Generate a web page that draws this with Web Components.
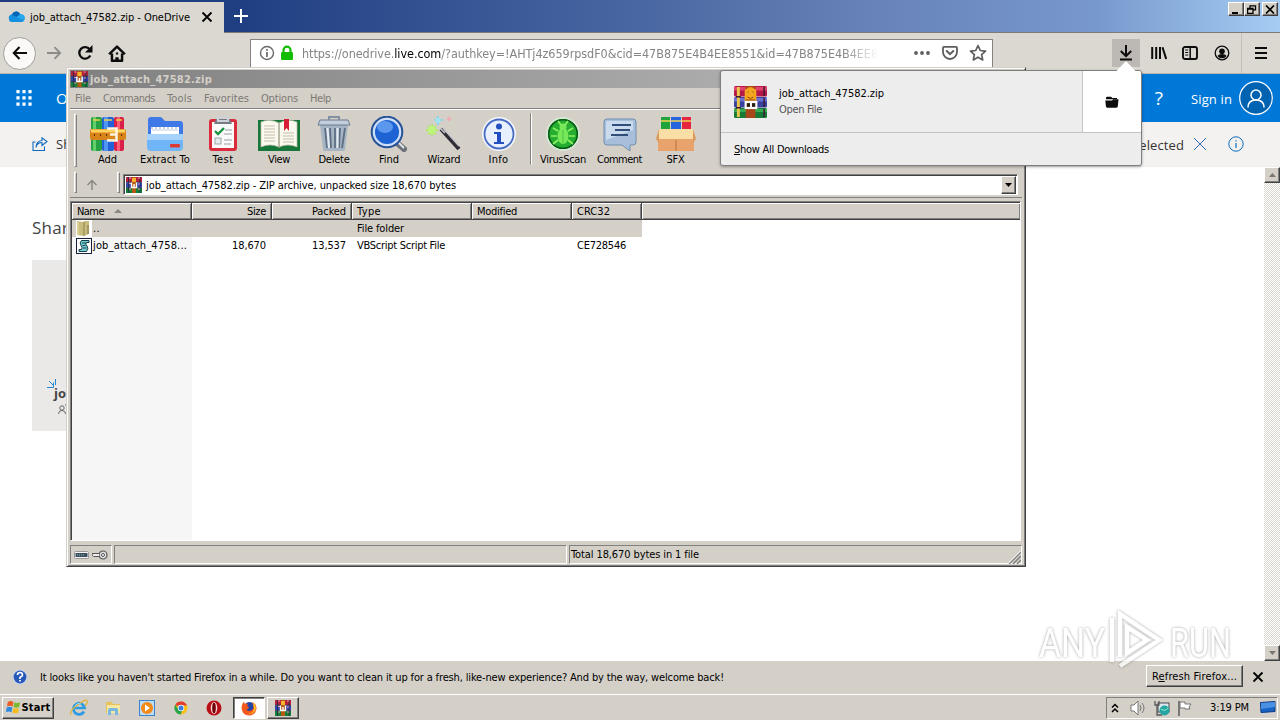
<!DOCTYPE html>
<html lang="en">
<head>
<meta charset="utf-8">
<title>job_attach_47582.zip - OneDrive</title>
<style>
html,body{margin:0;height:100%;overflow:hidden}
body{width:1280px;height:720px;background:#fff;font:11px/14px "DejaVu Sans Condensed","DejaVu Sans",sans-serif;font-stretch:condensed;color:#000}
</style>
</head>
<body>
<desktop-screen></desktop-screen>
<script>
const books = `
<rect x="0" y="0" width="34" height="10.5" rx="1.5" fill="#b5174a"/><rect x="0" y="1" width="34" height="3.5" fill="#e0446a"/>
<rect x="0" y="11" width="34" height="10.5" rx="1.5" fill="#39419d"/><rect x="0" y="12" width="34" height="3.5" fill="#6a70d0"/>
<rect x="0" y="22" width="34" height="10" rx="1.5" fill="#177a36"/><rect x="0" y="23" width="34" height="3" fill="#37aa52"/>
<rect x="3" y="1" width="3" height="30" fill="#e9c74b"/><path d="M2 10.700h5M2 21.700h5M31 1v9M31 12v9M31 23v8" stroke="#3b1730" stroke-width="1.500"/>
<rect x="12" y="0" width="10" height="32" fill="#a8481a"/><path d="M11 5q0-2 2-2 4-4 8 0 2 0 2 2v10H11z" fill="#f4a51f"/><path d="M14 6h1M19 6h1M14 11q3 3 6 0M12 14h10" stroke="#8c4410" fill="none"/>
<rect x="12" y="16" width="11" height="6" fill="#2d2010" stroke="#fff" stroke-width="2.200"/><rect x="16.500" y="15" width="2" height="6" fill="#fff"/>`;
const rar16 = `<rect width="16" height="5" fill="#b8203c"/><rect y="5.5" width="16" height="5" fill="#3343b0"/><rect y="11" width="16" height="5" fill="#15803a"/><path d="M0 5.2h16M0 10.7h16M2.5 0v16M14 0v16" stroke="#222a44" stroke-width=".8"/><path d="M3 1h2M3 6.500h2M3 12h2M12 1h2M12 7h2M12 12h2" stroke="#f0a0a8"/><rect x="6" width="4" height="16" fill="#b35a12"/><rect x="6" y="1" width="4" height="4" fill="#f6b52c"/><path d="M5.500 5.500v5h5v-5M8 7v3" fill="none" stroke="#fff" stroke-width="1.400"/>`;
const ICONS = {
rar:[16,16,rar16], books:[34,32,books],
cloud:[18,12,`<path d="M3 9Q0 8 1 5.500q1-2 3-2Q6 0 9.500.6 12 1 13 3.300q4 0 4.600 3Q18 11 14 11H4Q1 11 1 8z" fill="#1490df"/><path d="M4 3.500Q6 0 9.500.6 12 1 13 3.300L9 6z" fill="#0364b8"/><path d="M9 6l4-2.700q4 0 4.600 3Q18 8 17 9.500z" fill="#28a8ea"/>`],
x:[12,12,`<path d="M1.500 1.500l9 9M10.500 1.500l-9 9" stroke="currentColor" stroke-width="1.800"/>`],
thinx:[14,14,`<path d="M1 1l12 12M13 1L1 13" stroke="#2b6cb0"/>`],
plus:[14,14,`<path d="M7 0v14M0 7h14" stroke="#fff" stroke-width="2"/>`],
back:[16,14,`<path d="M15 7H2M7.500 1L1.800 7l5.700 6" fill="none" stroke="#0c0c0d" stroke-width="2.100"/>`],
fwd:[16,14,`<path d="M1 7h13M8.500 1.200L14.200 7l-5.700 5.800" fill="none" stroke="#8d8b87" stroke-width="1.800"/>`],
reload:[16,16,`<path d="M13.300 10.500A5.800 5.800 0 1 1 12.700 4.300" fill="none" stroke="#0c0c0d" stroke-width="2.300"/><path d="M15.500 0v7.500H8z" fill="#0c0c0d"/>`],
home:[16,16,`<path d="M1 8.700L8 1.500l7 7.200M3.500 8v6.800h9V8" fill="none" stroke="#0c0c0d" stroke-width="2.200" stroke-linejoin="round"/><path d="M6.500 15v-3.500h3V15zM7 7h2v2H7z" fill="#0c0c0d"/>`],
info:[16,16,`<circle cx="8" cy="8" r="6.500" fill="none" stroke="#6a6a6c" stroke-width="1.400"/><path d="M8 4v1.700M8 7v5" stroke="#6a6a6c" stroke-width="1.700"/>`],
lock:[14,16,`<path d="M3.500 8V5.200a3.500 3.500 0 0 1 7 0V8" fill="none" stroke="#12bc00" stroke-width="2.200"/><rect x="1" y="7" width="12" height="8" rx="1.300" fill="#12bc00"/>`],
dots:[16,4,`<circle cx="2" cy="2" r="1.900" fill="#5e5e60"/><circle cx="8" cy="2" r="1.900" fill="#5e5e60"/><circle cx="14" cy="2" r="1.900" fill="#5e5e60"/>`],
pocket:[16,16,`<path d="M2 1.800h12q1 0 1 1V7a7 7 0 0 1-14 0V2.800q0-1 1-1z" fill="none" stroke="#5e5e60" stroke-width="1.800"/><path d="M4.700 6L8 9.200 11.300 6" fill="none" stroke="#5e5e60" stroke-width="2" stroke-linecap="round"/>`],
star:[18,18,`<path d="M9 1.600l2.300 4.900 5.200.6-3.900 3.500 1.100 5.300L9 13.200l-4.700 2.700 1.100-5.300L1.500 7.100l5.200-.6z" fill="none" stroke="#5e5e60" stroke-width="1.700" stroke-linejoin="round"/>`],
down:[14,16,`<path d="M7 0v11M1.800 6L7 11.200 12.200 6" fill="none" stroke="#0c0c0d" stroke-width="2"/><path d="M1 14.500h12" stroke="#0c0c0d" stroke-width="2"/>`],
lib:[16,14,`<path d="M1.200 1v12M5.200 1v12M9 1v12" stroke="#0c0c0d" stroke-width="2"/><path d="M11.500 1.200L15.200 13" stroke="#0c0c0d" stroke-width="2"/>`],
side:[16,14,`<rect x="1" y="1" width="14" height="12" rx="2" fill="none" stroke="#0c0c0d" stroke-width="1.900"/><path d="M8.200 1v12" stroke="#0c0c0d" stroke-width="1.500"/><path d="M3.200 4h3M3.200 6.500h3M3.200 9h3" stroke="#0c0c0d"/>`],
acct:[16,16,`<circle cx="8" cy="8" r="6.800" fill="none" stroke="#0c0c0d" stroke-width="1.300"/><circle cx="8" cy="6.200" r="2.800" fill="#0c0c0d"/><path d="M3.500 11q1-2 4.500-2t4.500 2Q11 13.200 8 13.200T3.500 11z" fill="#0c0c0d"/>`],
menu:[12,14,`<path d="M0 2h12M0 7h12M0 12h12" stroke="#0c0c0d" stroke-width="2"/>`],
waffle:[16,16,`<path d="M2 0v16M8 0v16M14 0v16" stroke="#fff" stroke-width="3.200" stroke-dasharray="3.200 3.100"/>`],
person:[34,34,`<circle cx="17" cy="17" r="16.300" fill="#0063b1" stroke="#fff" stroke-width="1.200"/><circle cx="17" cy="14" r="5" fill="none" stroke="#fff" stroke-width="1.500"/><path d="M9 26.500q0-7.500 8-7.500t8 7.500" fill="none" stroke="#fff" stroke-width="1.500"/>`],
share:[16,14,`<path d="M3.500 5H1v8.500h11.500V9.500M4 10.500Q5 5.500 10 5.500V8.500L15 4.500 10 .8v2.700Q4 4 4 10.500z" fill="none" stroke="#0f6cbd" stroke-width="1.100"/>`],
infob:[16,16,`<circle cx="8" cy="8" r="7.200" fill="none" stroke="#0f6cbd"/><path d="M8 4.300v1.200M8 7v5" stroke="#0f6cbd" stroke-width="1.200"/>`],
spark:[10,10,`<path d="M2 2l4.500 4.500M0 8.500h6.500v-5M8.500 0v6" stroke="#2188d8" fill="none"/>`],
people:[10,10,`<circle cx="4" cy="4" r="2.200" fill="none" stroke="#666"/><path d="M.5 10q0-3.500 3.500-3.500T7.500 10M7 1q2-1 3 1M8 5l2 1" fill="none" stroke="#666"/>`],
folder:[14,12,`<path d="M1 2q0-1.300 1.300-1.300H6L7.300 2H12v1.300H1z" fill="#0c0c0d"/><path d="M.3 4.500H7L8.300 3.300h5.200l-.7 7q-.1 1.400-1.500 1.400H2.400Q1 11.700.9 10.300z" fill="#0c0c0d"/>`],
up:[12,12,`<path d="M6 11V2M1.500 6L6 1.500 10.500 6" fill="none" stroke="#8b8883" stroke-width="1.500"/>`],
add:[36,36,`<rect x="1" y="1" width="11" height="34" rx="2" fill="#26a243"/><rect x="3" y="1" width="3" height="34" fill="#63cf6c"/><rect x="12" y="1" width="12" height="34" rx="2" fill="#2461d8"/><rect x="14" y="1" width="4" height="34" fill="#4f97f3"/><rect x="24" y="1" width="10" height="34" rx="2" fill="#d92048"/><rect x="27" y="1" width="3" height="34" fill="#ff6077"/><path d="M3 4h7M14 4h8M26 4h6" stroke="#f0ce45" stroke-width="1.500"/><rect x="0" y="13" width="36" height="11" rx="2" fill="#d98418"/><path d="M1 15h34" stroke="#ffd45e" stroke-width="3"/><path d="M4 19h1M10 19h1M16 19h1M31 19h1" stroke="#5c2c08" stroke-width="2"/><path d="M18.500 14v-1.500h8v12h-8V23M20 18.500h6" fill="none" stroke="#fff4e0" stroke-width="2.600"/>`],
extract:[38,36,`<path d="M2 4q0-3 3-3h9q2 0 3 2l2 2h15q3 0 3 3v22H2z" fill="#3f79e8"/><path d="M5 11h28v12H5z" fill="#fff"/><path d="M6 14h26" stroke="#bed1ea"/><path d="M5 12h28" stroke="#94a8c0" stroke-dasharray="2 2"/><path d="M1 18h36v13q0 4-4 4H5q-4 0-4-4z" fill="#6fb5f7"/><path d="M1 18h36v6H1z" fill="#a5d3fb"/><rect x="24" y="28" width="10" height="3.500" rx="1" fill="#dc3b34"/>`],
test:[30,36,`<rect x="1" y="3" width="28" height="32" rx="3" fill="#d92b3c"/><rect x="4" y="6" width="22" height="26" fill="#fafafa"/><path d="M8 3h14l2 5H6z" fill="#777b84"/><path d="M10 1h10v4H10z" fill="none" stroke="#ced1d7" stroke-width="2"/><path d="M7 15l3 3 6-6" fill="none" stroke="#17933e" stroke-width="2.300"/><path d="M17 14h7M16 18h8M16 24h8M16 28h7" stroke="#98a0a8"/><rect x="7" y="22" width="6" height="6" fill="#e9ecef" stroke="#9aa"/>`],
view:[44,36,`<path d="M1 4h42v31H1z" fill="#17773b"/><path d="M4 6q9-4 18 1v24q-9-4-18 0zM40 6q-9-4-18 1v24q9-4 18 0z" fill="#fbf9ee" stroke="#b9b8a4" stroke-width=".7"/><path d="M7 10h11M7 13h11M7 16h11M7 19h11M7 22h11M7 25h11M26 17h11M26 20h11M26 23h11M26 26h11" stroke="#c3bcab"/><path d="M27 3h5v12l-2.500-3-2.500 3z" fill="#d71d35"/><path d="M22 7v25" stroke="#a2a28f"/>`],
delete:[34,36,`<path d="M3 9h28l-3 24q0 2-3 2H9q-3 0-3-2z" fill="#a6b4c4"/><path d="M8 12l2 20M13 12l1 20M18 12v20M23 12l-1 20M28 12l-3 20" stroke="#5d6e83" stroke-width="1.800"/><path d="M10.500 12l1.500 20M20.500 12v20" stroke="#e5edf4" stroke-width="2"/><path d="M1 9l2-5h28l2 5z" fill="#c4cedb" stroke="#697b91"/><path d="M12 4V1h10v3" fill="none" stroke="#8290a3" stroke-width="2"/>`],
find:[38,36,`<path d="M26 26l8 7" stroke="#6b727b" stroke-width="6" stroke-linecap="round"/><path d="M26 24l8 8" stroke="#e3e6e9" stroke-width="2"/><circle cx="17" cy="16" r="13.300" fill="#1d63d3" stroke="#cfe0f6" stroke-width="2.500"/><circle cx="17" cy="16" r="15.300" fill="none" stroke="#27539a" stroke-width="2"/><ellipse cx="15" cy="11" rx="8" ry="6" fill="#5c97ee"/>`],
wizard:[36,36,`<path d="M15 13l18 20" stroke="#302d36" stroke-width="4"/><path d="M14 12l5 5M17 12l16 18" stroke="#c4c6cb" stroke-width="1.600"/><g stroke-width="1.600"><path d="M6 8v12M0 14h12M2 10l8 8M10 10l-8 8" stroke="#a3ed59"/><path d="M12 0v9M8 4h9" stroke="#78d5ee"/><path d="M23 1v4M21 3h4" stroke="#f4a8b3"/></g><circle cx="6" cy="14" r="4" fill="#bdf57a"/><circle cx="12" cy="4.500" r="2.500" fill="#9fe4f5"/>`],
infobig:[36,36,`<circle cx="18" cy="18" r="17" fill="#f5f7ff"/><circle cx="18" cy="18" r="14.500" fill="#e8efff" stroke="#456bc0" stroke-width="1.800"/><circle cx="18" cy="10.500" r="3" fill="#244fc0"/><path d="M13 16h7v10h3v2H13v-2h3v-8h-3z" fill="#244fc0"/>`],
virus:[36,36,`<circle cx="18" cy="18" r="16" fill="#138b22" stroke="#d6e8d3" stroke-width="2"/><circle cx="18" cy="18" r="14.300" fill="#27ae31" stroke="#065c15" stroke-width="1.500"/><ellipse cx="18" cy="20" rx="5.500" ry="8" fill="#77e859"/><circle cx="18" cy="11" r="3.500" fill="#77e859"/><path d="M13 15l-5-3M12 20H6M13 24l-5 4M23 15l5-3M24 20h6M23 24l5 4M16 9l-3-4M20 9l3-4" stroke="#8af267" stroke-width="1.700"/><path d="M18 14v13" stroke="#4cc447"/>`],
comment:[36,36,`<path d="M5 3h26q3 0 3 3v20q0 3-3 3h-3v6l-8-6H5q-3 0-3-3V6q0-3 3-3z" fill="#a8bfdc" stroke="#718dae"/><path d="M5 5h26v9L4 24V6z" fill="#cadbed"/><path d="M10 9h19M13 14h15M9 19h17" stroke="#304e79" stroke-width="1.800"/>`],
sfx:[40,36,`<rect x="5" y="1" width="9" height="19" fill="#20a33b"/><rect x="15" y="1" width="10" height="19" fill="#2864dc"/><rect x="26" y="1" width="9" height="19" fill="#e52540"/><path d="M5 5h9M15 5h10M26 5h9" stroke="#efd452" stroke-width="1.500"/><path d="M2 15h36v20H2z" fill="#e8a36c"/><path d="M3 13h34l2 10H1z" fill="#f9dfa6"/><path d="M0 23l3-10v14zM40 23l-3-10v14z" fill="#dc985a"/><path d="M20 24v11" stroke="#bd703c"/>`],
fold:[16,17,`<rect width="16" height="17" fill="#fff"/><path d="M1 1l7 1v14l-7-1zM8 1h5v13l-5 2z" fill="#c9bd7d"/><path d="M8 2v14" stroke="#8e834d"/><path d="M2 2v13" stroke="#eee5ae"/><path d="M12 5v9" stroke="#a29860" stroke-width="2"/>`],
vbs:[16,16,`<rect x=".5" y=".5" width="15" height="15" fill="#fff" stroke="#16203c"/><path d="M5.500 2.500h7.500v2h-2.500q-1.500 1.500.5 3.500t-.5 5.500H3v-2h2.500q1.500-1.500-.5-4t.5-5z" fill="#75cfd3" stroke="#123d48"/><path d="M6 5h4M6.500 7.500h3M7 10h3.500" stroke="#123d48"/>`],
drive:[15,8,`<rect x=".5" y=".5" width="14" height="7" rx="1" fill="#f4f4f4" stroke="#999"/><path d="M1.500 2h12v4h-12z" fill="#3c4e5c"/><path d="M3 4h8" stroke="#8cc" stroke-dasharray="1 1"/>`],
key:[16,10,`<circle cx="11" cy="5" r="4" fill="#dedede" stroke="#555" stroke-width="1.200"/><circle cx="11" cy="5" r="1.500" fill="#fff" stroke="#555"/><path d="M0 3.500h7.500M2 6.500h5.500M0 3v2l2 1.500" stroke="#555" fill="none"/><path d="M1 5h6" stroke="#eee" stroke-width="2"/>`],
help:[16,16,`<circle cx="8" cy="8" r="7.500" fill="#c9d6ef"/><circle cx="8" cy="8" r="6.400" fill="#2858b8"/><path d="M5.500 6q0-2.500 2.500-2.500T10.500 6q0 1.300-2.500 2.300V10M8 11v1.500" fill="none" stroke="#fff" stroke-width="1.700"/>`],
win:[16,16,`<path d="M2 2q3-2 6 0L7 7Q4 5.500 1 7z" fill="#ee5a24"/><path d="M9 2.500q3 1.500 6 0L14 7.500q-3 1.500-6 0z" fill="#7cb82f"/><path d="M.8 8q3-1.500 6 0l-1 5q-3-1.500-6 0z" fill="#2d8be0"/><path d="M7.800 8.500q3 1.500 6 0l-1 5q-3 1.500-6 0z" fill="#f9bc1e"/>`],
ie:[18,18,`<path d="M14 12.500A5.600 5.600 0 1 1 14.600 9H5" fill="none" stroke="#2d9be2" stroke-width="2.700"/><path d="M1 16Q-1 12 8 5.500T17 2q1 2-2 5" fill="none" stroke="#dcb63a" stroke-width="1.300"/><path d="M5 7q2-4 6-2" stroke="#a2def9" fill="none"/>`],
explorer:[16,16,`<path d="M1 2h6l1 2h7v9H1z" fill="#e6c35a"/><path d="M2 5h13v8H2z" fill="#f8e7a0"/><path d="M3 15v-5q0-2 2-2h6q2 0 2 2v5h-3v-4H6v4z" fill="#77b8e2"/>`],
wmp:[16,16,`<rect x=".5" y=".5" width="15" height="15" fill="#bfdcf7" stroke="#3c82ce"/><circle cx="8" cy="8" r="6" fill="#f18a16"/><path d="M6 4.500l5 3.500-5 3.500z" fill="#fff"/>`],
chrome:[16,16,`<circle cx="8" cy="8" r="6.500" fill="#fbc116"/><path d="M8 8L2.300 4.700A6.500 6.500 0 0 1 14 5.500H8z" fill="#e33b2e"/><path d="M2.300 4.700A6.500 6.500 0 0 0 7.500 14.500L10 9.500 5 9z" fill="#27a34a"/><circle cx="8" cy="8" r="3.200" fill="#fff"/><circle cx="8" cy="8" r="2.500" fill="#3a7de0"/>`],
opera:[16,16,`<circle cx="8" cy="8" r="7.500" fill="#b80f16"/><ellipse cx="8" cy="8" rx="3.300" ry="6" fill="#f7d7d7"/><ellipse cx="8" cy="8" rx="1.800" ry="5.300" fill="#700008"/>`],
firefox:[16,16,`<circle cx="8.500" cy="8" r="6" fill="#2444a8"/><path d="M1 5Q2 2 3 2L4 4Q6 3 7 4 5 6 8 7 7 10 5 9q3 4 7 0 1-4-1-7 5 2 4.500 7Q14 15.500 8 15.500T.7 9Q.5 7 1 5z" fill="#f4581b"/><path d="M12 2q4 4 2.500 8-3 5-8 3.500 6 0 6.500-5z" fill="#ffc426"/>`],
chev:[8,10,`<path d="M1 4.500L4 1.500l3 3M1 9L4 6l3 3" fill="none" stroke="#000" stroke-width="1.500"/>`],
sound:[16,16,`<path d="M1 5h3l4-4v14L4 11H1z" fill="#fff" stroke="#777"/><path d="M10 5q2 3 0 6M12 3q4 5 0 10" stroke="#777" fill="none"/>`],
net:[16,16,`<rect x="4" y="3" width="11" height="9" fill="#dce7ee" stroke="#404850"/><path d="M1 1v4h4V1M3 5v10h5" fill="none" stroke="#555" stroke-width="1.300"/><circle cx="10.500" cy="10.500" r="5" fill="#26a6a0"/><path d="M7 9q4 3 7-1" stroke="#9be8df" fill="none"/>`],
flag:[16,16,`<path d="M2 1v15" stroke="#777" stroke-width="2"/><path d="M3 2h5v2h6l-2 3 1 2H8V8H3z" fill="#fff" stroke="#777"/>`],
desk:[16,14,`<path d="M.5 1.500L15 .5v10l-14 1z" fill="#1762c5" stroke="#0e387b"/><path d="M1 2l14-1v5L1 8z" fill="#4a91e4"/><path d="M1 12.500h14" stroke="#ccd5df"/>`],
grip:[13,13,`<path d="M1 13L13 1M5 13l8-8M9 13l4-4" stroke="#808080" stroke-width="1.500"/><path d="M0 12.500L12.500 0" stroke="#fff"/>`],
sort:[8,4,`<path d="M0 4l4-4 4 4z" fill="#8a8780"/>`],
triD:[7,4,`<path d="M0 0h7L3.500 4z" fill="currentColor"/>`],
triU:[7,4,`<path d="M0 4h7L3.500 0z" fill="currentColor"/>`],
wmin:[10,9,`<path d="M1 8h6" stroke="#000" stroke-width="2"/>`],
wres:[10,9,`<path d="M3 3V.9h5.500v4H6.500M.6 3.500h5.400v4.800H.6zM.6 4h5.400" fill="none" stroke="#000" stroke-width="1.300"/>`],
wx:[10,9,`<path d="M1 .5l8 8M9 .5l-8 8" stroke="#000" stroke-width="1.700"/>`]
};
const define = (name, css, html) => customElements.define(name, class extends HTMLElement {
  connectedCallback(){
    if (this.shadowRoot) return;
    this.attachShadow({mode:'open'}).innerHTML = `<style>*{box-sizing:border-box}${css}</style>${typeof html==='function'?html(this):html}`;
  }
});
define('ui-icon', ':host{display:block;flex:none;line-height:0}svg{display:block}', e=>{
  const [w,h,s]=ICONS[e.getAttribute('name')], W=e.getAttribute('w')||w, H=e.getAttribute('h')||h;
  return `<svg width="${W}" height="${H}" viewBox="0 0 ${w} ${h}" preserveAspectRatio="none">${s}</svg>`;});

define('bevel-button', `:host{display:flex;align-items:center;justify-content:center;box-sizing:border-box;flex:none;background:#d4d0c8;border:1px solid;border-color:#fff #404040 #404040 #fff;box-shadow:inset -1px -1px #808080}
:host([pressed]){background:#fff;border-color:#404040 #fff #fff #404040;box-shadow:inset 1px 1px #808080}`, '<slot></slot>');

define('fx-tabs', `:host{--dy:1px;display:flex;height:33px;flex:none;border-bottom:1px solid #7d7b78;background:linear-gradient(90deg,#1f3b7f 0,#203f83 240px,#4967a2 640px,#6681b5 860px,#7899cd 1100px,#a5cdf3 1280px)}
.tab{width:224px;margin-top:2px;height:32px;background:#dbd8d1;display:flex;align-items:center;padding:0 11px 2px 8px}
.tab fit-text{margin-left:5px;flex:1}.plus{margin:9px 0 0 10px}.ctl{margin:2px 2px 0 auto;display:flex;height:14px}`,
`<div class="tab"><ui-icon name="cloud" w="17"></ui-icon><fit-text w="160">job_attach_47582.zip - OneDrive</fit-text><ui-icon name="x"></ui-icon></div>
<ui-icon class="plus" name="plus"></ui-icon>
<div class="ctl"><bevel-button style="width:16px"><ui-icon name="wmin"></ui-icon></bevel-button><bevel-button style="width:16px"><ui-icon name="wres"></ui-icon></bevel-button><bevel-button style="width:16px;margin-left:2px"><ui-icon name="wx"></ui-icon></bevel-button></div>`);

define('fx-nav', `:host{--dy:1px;display:flex;height:41px;flex:none;background:#dbd8d1;align-items:center;border-bottom:1px solid #b7b4ae}
.back{width:33px;height:33px;border-radius:50%;border:1px solid #a19f9b;background:#faf9f7;display:flex;align-items:center;justify-content:center;margin-left:3px}
.url{width:743px;height:29px;margin-left:124px;border:1px solid #858381;background:#fff;display:flex;align-items:center;padding:0 6px 0 8px}
.u{width:576px;margin:0 36px 0 8px;font-size:12.500px;line-height:16px;color:#858585;-webkit-mask:linear-gradient(90deg,#000 94%,transparent)}b{font-weight:400;color:#000}
.dl{width:28px;height:28px;background:#bcb9b4;display:flex;align-items:center;justify-content:center;margin-left:119px}
i{height:40px;border-left:1px solid #c4c1bb;margin:0 13px 0 11px}`,
`<div class="back"><ui-icon name="back"></ui-icon></div><ui-icon name="fwd" style="margin-left:10px"></ui-icon><ui-icon name="reload" style="margin-left:15px"></ui-icon><ui-icon name="home" w="18" h="17" style="margin-left:15px"></ui-icon>
<div class="url"><ui-icon name="info"></ui-icon><ui-icon name="lock" style="margin-left:5px"></ui-icon><div class="u"><fit-text w="576">https://onedrive.<b>live.com</b>/?authkey=!AHTj4z659rpsdF0&amp;cid=47B875E4B4EE8551&amp;id=47B875E4B4EE8</fit-text></div>
<ui-icon name="dots"></ui-icon><ui-icon name="pocket" style="margin-left:12px"></ui-icon><ui-icon name="star" style="margin-left:11px"></ui-icon></div>
<div class="dl"><ui-icon name="down"></ui-icon></div><ui-icon name="lib" style="margin-left:11px"></ui-icon><ui-icon name="side" style="margin-left:15px"></ui-icon><ui-icon name="acct" style="margin-left:16px"></ui-icon><i></i><ui-icon name="menu"></ui-icon>`);

define('od-page', `:host{display:flex;flex-direction:column;flex:1;min-height:0;background:#fff;font-family:"Open Sans","Noto Sans",sans-serif;font-stretch:normal}
.head{height:48px;background:#0078d7;color:#fff;display:flex;align-items:center;padding:0 7px 0 16px;flex:none;font-size:14px}
.cmd{height:45px;background:#f3f2f0;display:flex;align-items:center;padding:0 36px 0 32px;flex:none;color:#333;font-size:13px;border-bottom:1px solid #eee;--dy:1px}
.main{flex:1;display:flex;min-height:0}.body{flex:1;padding:49px 32px 0}
h1{font:400 17px/24px "Open Sans";letter-spacing:.2px;margin:0 0 20px;color:#444}
.tile{width:180px;height:171px;background:#ebe9e8;display:flex;flex-direction:column;padding:119px 0 0 15px;font-size:13px;color:#444;line-height:16px}
.tile b{margin:-4px 0 0 7px}.tile ui-icon+b+ui-icon{margin:3px 0 0 11px}
.sb{width:16px;display:flex;flex-direction:column;justify-content:space-between;background:repeating-conic-gradient(#fff 0 25%,#dcd9d3 0 50%) 0 0/2px 2px;color:#7b7873}
.sb bevel-button{height:16px}.r{margin-left:auto}`,
`<div class="head"><ui-icon name="waffle"></ui-icon><span style="margin-left:24px;font-size:15px">O</span><span class="r" style="font-size:19px;margin-right:1px">?</span><fit-text w="41" style="margin:1px 7px 0 27px;font-size:13px">Sign in</fit-text><ui-icon name="person"></ui-icon></div>
<div class="cmd"><ui-icon name="share"></ui-icon><span style="margin-left:8px">Sh</span><fit-text class="r" w="62">1 selected</fit-text><ui-icon name="thinx" style="margin-left:9px"></ui-icon><ui-icon name="infob" style="margin-left:21px"></ui-icon></div>
<div class="main"><div class="body"><h1>Shared</h1><div class="tile"><ui-icon name="spark"></ui-icon><b>job_attach</b><ui-icon name="people"></ui-icon></div></div>
<div class="sb"><bevel-button><ui-icon name="triU"></ui-icon></bevel-button><bevel-button><ui-icon name="triD"></ui-icon></bevel-button></div></div>`);

define('fx-notice', `:host{--dy:1px;display:flex;height:33px;flex:none;background:#d4d0c8;align-items:center;padding:0 16px 1px 12px;box-sizing:border-box}`,
`<ui-icon name="help"></ui-icon><fit-text w="684" style="margin-left:12px">It looks like you haven't started Firefox in a while. Do you want to clean it up for a fresh, like-new experience? And by the way, welcome back!</fit-text>
<bevel-button style="width:97px;height:22px;margin:-2px 9px 0 auto"><fit-text w="85">R<u>e</u>fresh Firefox...</fit-text></bevel-button><ui-icon name="x"></ui-icon>`);

define('win-taskbar', `:host{display:flex;height:26px;flex:none;background:#d4d0c8;border-top:1px solid #fff;box-sizing:border-box;align-items:center;padding:0 2px}
.start{width:52px;height:22px;font-weight:700}.q{display:flex;margin-left:16px;gap:18px;align-items:center;width:163px;flex:none}
.tray{margin-left:auto;width:172px;height:22px;border:1px solid;border-color:#808080 #fff #fff #808080;display:flex;align-items:center;padding:0 1px 0 5px}`,
`<bevel-button class="start"><ui-icon name="win" w="15" h="15"></ui-icon><fit-text w="29" style="margin-left:1px">Start</fit-text></bevel-button>
<div class="q"><ui-icon name="ie"></ui-icon><ui-icon name="explorer" style="margin-left:-1px"></ui-icon><ui-icon name="wmp"></ui-icon><ui-icon name="chrome"></ui-icon><ui-icon name="opera" style="margin-left:-1px"></ui-icon></div>
<bevel-button pressed style="width:32px;height:22px"><ui-icon name="firefox"></ui-icon></bevel-button><bevel-button style="width:32px;height:22px;margin-left:2px"><ui-icon name="rar"></ui-icon></bevel-button>
<div class="tray"><ui-icon name="chev" style="margin-left:-1px"></ui-icon><ui-icon name="sound" style="margin-left:11px"></ui-icon><ui-icon name="net" style="margin-left:8px"></ui-icon><ui-icon name="flag" style="margin-left:7px"></ui-icon><fit-text w="39" style="margin-left:17px">3:19 PM</fit-text><ui-icon name="desk" style="margin-left:auto"></ui-icon></div>`);

define('rar-tool', `:host{display:flex;flex-direction:column;align-items:center;flex:none;height:51px;justify-content:space-between}`,
 e=>`<ui-icon name="${e.getAttribute('icon')}"></ui-icon><fit-text w="${e.getAttribute('tw')}"><slot></slot></fit-text>`);

const T=(icon,label,w,tw)=>`<rar-tool icon="${icon}" tw="${tw}" style="width:${w}px">${label}</rar-tool>`;
const F=(w,t,s='')=>`<fit-text w="${w}" style="${s}">${t}</fit-text>`;
define('rar-window', `:host{display:flex;flex-direction:column;box-sizing:border-box;background:#d4d0c8;border:1px solid;border-color:#d4d0c8 #404040 #404040 #d4d0c8;box-shadow:inset 1px 1px #fff,inset -1px -1px #808080;padding:2px 3px 2px 3px}
.title,.menu,.addr,.hd{--dy:1px}
.title{height:18px;background:linear-gradient(90deg,#808080,#a6a6a6 60%,#c0c0c0);color:#d4d0c8;font-weight:700;display:flex;align-items:center;padding-left:1px;gap:2px;flex:none}
.menu{height:20px;display:flex;align-items:center;gap:12px;padding-left:5px;color:#7c7975;flex:none}
.tools{height:62px;border-top:1px solid #808080;box-shadow:inset 0 1px #fff;display:flex;align-items:flex-start;padding:7px 0 0 4px;flex:none}
.g{width:3px;align-self:flex-start;border:1px solid;border-color:#fff #808080 #808080 #fff;flex:none}
.addr{height:28px;display:flex;align-items:center;padding:2px 4px 0 4px;flex:none;border-bottom:1px solid #808080}
.combo{flex:1;height:21px;margin-left:3px;background:#fff;border:1px solid #808080;border-right-color:#fff;border-bottom-color:#fff;box-shadow:inset 1px 1px #404040;display:flex;align-items:center;padding:1px 1px 1px 2px}
.list{flex:1;min-height:0;margin:3px 1px 0 0;border:1px solid #808080;border-color:#808080 #fff #fff #808080;box-shadow:inset 1px 1px #404040;background:#fff;padding:1px 0 0 1px;display:flex;flex-direction:column}
.row,.hd{display:grid;grid-template-columns:120px 80px 80px 120px 100px 70px;align-items:center}
.hd{height:17px;grid-template-columns:120px 80px 80px 120px 100px 70px 1fr;background:#d4d0c8;flex:none}
.hd>div{height:17px;border-right:1px solid #404040;border-bottom:1px solid #404040;box-shadow:inset 1px 1px #fff,inset -1px -1px #808080;display:flex;align-items:center;padding:0 5px}
.hd>div:last-child{border-right:0}.hd .e{justify-content:flex-end}.row .e{justify-self:end;margin:0 6px 0 0}
.row{height:17px;width:570px;padding:0;flex:none}.row>*{margin-left:5px}.row>.name{margin-left:4px}.sel{background:#d4d0c8}
.name{display:flex;align-items:center;gap:1px}.files{flex:1;background:linear-gradient(90deg,#f6f6f6 120px,#fff 120px)}
.status{height:19px;margin-top:4px;display:flex;gap:2px;flex:none}.status>div{border:1px solid;border-color:#808080 #fff #fff #808080;display:flex;align-items:center}`,
`<div class="title"><ui-icon name="rar" w="17"></ui-icon>${F(122,'job_attach_47582.zip')}</div>
<div class="menu">${F(16,'File')}${F(52,'Commands')}${F(25,'Tools')}${F(45,'Favorites')}${F(37,'Options')}${F(21,'Help')}</div>
<div class="tools"><div class="g" style="height:53px;margin-right:3px;margin-top:-2px"></div>${T('add','Add',55,19)}${T('extract','Extract To',60,50)}${T('test','Test',56,21)}${T('view','View',56,22)}${T('delete','Delete',54,31)}${T('find','Find',56,20)}${T('wizard','Wizard',54,33)}${T('infobig','Info',55,20)}<div class="g" style="border-color:transparent #fff transparent #808080;width:2px;height:52px;margin:-3px 3px 0 4px"></div>${T('virus','VirusScan',56,46)}${T('comment','Comment',57,45)}${T('sfx','SFX',55,18)}</div>
<div class="addr"><div class="g" style="height:21px"></div><ui-icon name="up" style="margin:0 19px 0 9px"></ui-icon><div class="g" style="height:21px"></div>
<div class="combo"><ui-icon name="rar"></ui-icon>${F(310,'job_attach_47582.zip - ZIP archive, unpacked size 18,670 bytes','margin-left:4px')}<bevel-button style="width:15px;height:18px;margin-left:auto"><ui-icon name="triD"></ui-icon></bevel-button></div></div>
<div class="list"><div class="hd"><div>${F(27,'Name')}<ui-icon name="sort" style="margin-left:10px"></ui-icon></div><div class="e">${F(19,'Size')}</div><div class="e">${F(34,'Packed')}</div><div>${F(24,'Type')}</div><div>${F(40,'Modified')}</div><div>${F(33,'CRC32')}</div><div></div></div>
<div class="files"><div class="row sel"><div class="name"><ui-icon name="fold"></ui-icon>${F(7,'..')}</div><span></span><span></span>${F(47,'File folder')}</div>
<div class="row"><div class="name"><ui-icon name="vbs"></ui-icon>${F(94,'job_attach_4758...')}</div>${F(34,'18,670').replace('<fit-text','<fit-text class="e"')}${F(34,'13,537').replace('<fit-text','<fit-text class="e"')}${F(88,'VBScript Script File')}<span></span>${F(49,'CE728546')}</div></div></div>
<div class="status"><div style="width:42px;gap:3px;padding-left:3px"><ui-icon name="drive"></ui-icon><ui-icon name="key"></ui-icon></div><div style="width:453px"></div><div style="flex:1;padding-left:1px">${F(128,'Total 18,670 bytes in 1 file')}<ui-icon name="grip" style="margin:5px 0 0 auto"></ui-icon></div></div>`);

define('dl-popup', `:host{--dy:1px;display:block}.box{height:96px;border:1px solid #7f7f7e;border-radius:3px;background:#ededed;box-shadow:0 1px 3px #0005;display:flex;flex-direction:column;overflow:hidden}
.item{height:62px;border-bottom:1px solid #c4c4c4;display:flex;align-items:center}.t{flex:1;margin:0 0 0 12px}.s{color:#555;margin-top:3px;--dy:0px}
.f{width:59px;height:61px;background:#fff;border-left:1px solid #c4c4c4;display:flex;align-items:center;justify-content:center}
.all{padding:9px 13px}.arrow{position:absolute;right:6px;top:-9px}`,
`<div class="box"><div class="item"><ui-icon name="books" style="margin-left:13px" w="33"></ui-icon><div class="t">${F(105,'job_attach_47582.zip')}<div class="s">${F(43,'Open File')}</div></div><div class="f"><ui-icon name="folder"></ui-icon></div></div><div class="all">${F(95,'<u>S</u>how All Downloads')}</div></div>
<svg class="arrow" width="20" height="11"><path d="M0 10.500L10 0l10 10.500z" fill="#fff"/></svg>`);

define('any-watermark', ':host{display:block}svg{display:block;filter:drop-shadow(0 0 1.500px #0007)}text{font:400 41px/44px Roboto,sans-serif;fill:#fff}',
`<svg width="230" height="66" opacity=".75"><text x="3" y="49" textLength="66" lengthAdjust="spacingAndGlyphs">ANY</text><text x="134" y="49" textLength="61" lengthAdjust="spacingAndGlyphs">RUN</text><path d="M76 54V10M84 49V6l39 26-39 26M91 19v26l20-13z" fill="none" stroke="#fff" stroke-width="4.500"/></svg>`);

define('desktop-screen', `:host{display:flex;flex-direction:column;width:1280px;height:720px;position:relative;overflow:hidden}
rar-window{position:absolute;left:66px;top:67px;width:960px;height:500px}dl-popup{position:absolute;left:720px;top:70px;width:422px}any-watermark{position:absolute;left:1036px;top:608px}`,
`<fx-tabs></fx-tabs><fx-nav></fx-nav><od-page></od-page><fx-notice></fx-notice><win-taskbar></win-taskbar><rar-window></rar-window><dl-popup></dl-popup><any-watermark></any-watermark>`);

/* One line of text, tracked so that it fills the given width; --dy nudges its baseline inside the line. */
customElements.define('fit-text', class extends HTMLElement {
  connectedCallback(){
    if (this.shadowRoot) return;
    this.attachShadow({mode:'open'}).innerHTML='<style>:host{display:block;white-space:pre;flex:none}span{display:block;width:max-content;padding-top:var(--dy,0px);margin-bottom:calc(-1*var(--dy,0px))}</style><span><slot></slot></span>';
    const s=this.shadowRoot.querySelector('span'), w=+this.getAttribute('w'), host=this.getRootNode().host;
    const n=(this.textContent||(host&&host.textContent)||' ').length;
    s.style.letterSpacing=(w-s.getBoundingClientRect().width)/n+'px';
  }
});
</script>
</body>
</html>
